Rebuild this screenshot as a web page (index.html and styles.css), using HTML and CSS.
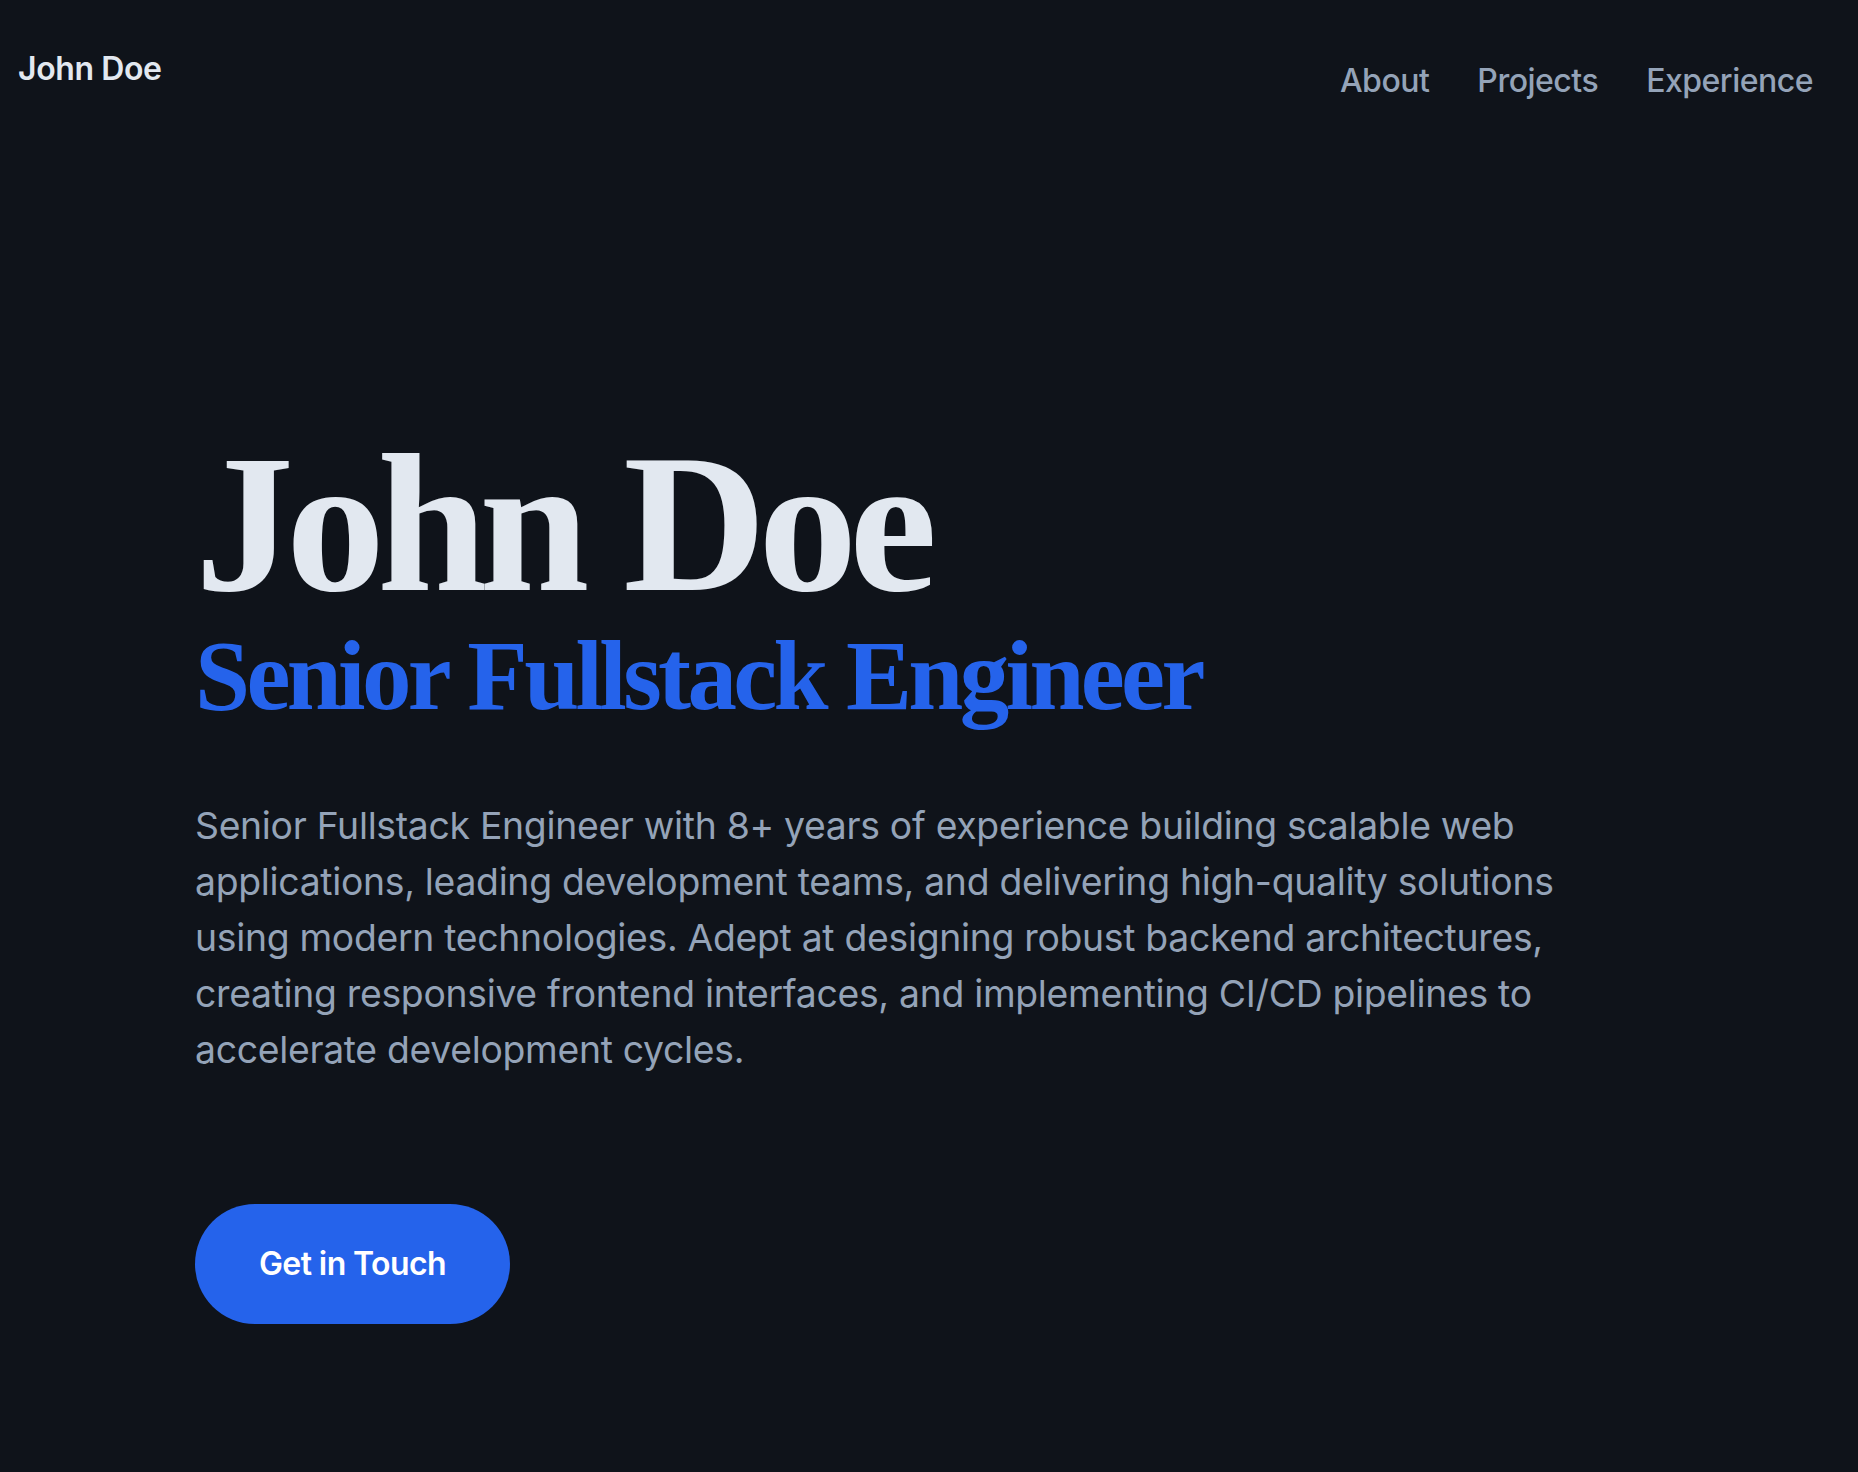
FILE: index.html
```html
<!DOCTYPE html>
<html lang="en">
<head>
<meta charset="utf-8">
<title>John Doe</title>
<link rel="stylesheet" href="styles.css">
</head>
<body>
<header class="site-header">
  <a class="logo" href="#">John Doe</a>
  <nav class="nav">
    <a href="#about">About</a>
    <a href="#projects">Projects</a>
    <a href="#experience">Experience</a>
  </nav>
</header>
<main class="hero">
  <h1 class="hero-name">John Doe</h1>
  <h2 class="hero-role">Senior Fullstack Engineer</h2>
  <p class="hero-text">Senior Fullstack Engineer with 8+ years of experience building scalable web applications, leading development teams, and delivering high-quality solutions using modern technologies. Adept at designing robust backend architectures, creating responsive frontend interfaces, and implementing CI/CD pipelines to accelerate development cycles.</p>
  <a class="btn" href="#contact">Get in Touch</a>
</main>
</body>
</html>
```
FILE: styles.css
```css
* { box-sizing: border-box; }
html, body {
  margin: 0;
  padding: 0;
  background: #0f131a;
  min-height: 100%;
}
body {
  font-family: Inter, "Noto Sans", sans-serif;
  color: #e2e8f0;
}
a { text-decoration: none; }

.site-header {
  display: flex;
  justify-content: space-between;
  align-items: flex-start;
  padding: 45px 45px 0 18px;
}
.logo {
  font-size: 32px;
  line-height: 48px;
  font-weight: 600;
  letter-spacing: -0.4px;
  color: #e2e8f0;
}
.nav {
  display: flex;
  gap: 48px;
  padding-top: 12px;
}
.nav a {
  font-size: 32px;
  line-height: 48px;
  font-weight: 500;
  letter-spacing: -0.5px;
  color: #94a3b8;
}

.hero {
  padding: 320px 0 0 195px;
}
.hero-name {
  margin: 0;
  font-family: "Liberation Serif", "Times New Roman", serif;
  font-weight: 700;
  font-size: 198px;
  line-height: 1;
  letter-spacing: -0.04em;
  color: #e2e8f0;
}
.hero-role {
  margin: 3px 0 0;
  font-family: "Liberation Serif", "Times New Roman", serif;
  font-weight: 700;
  font-size: 99px;
  line-height: 1;
  letter-spacing: -0.037em;
  color: #2563eb;
}
.hero-text {
  margin: 73px 0 0;
  max-width: 1400px;
  font-size: 37.33px;
  line-height: 56px;
  letter-spacing: -0.3px;
  color: #94a3b8;
}
.btn {
  display: inline-block;
  margin-top: 126px;
  padding: 36px 64px;
  border-radius: 9999px;
  background: #2563eb;
  color: #ffffff;
  font-size: 32px;
  line-height: 48px;
  font-weight: 600;
  letter-spacing: -0.6px;
}
```
